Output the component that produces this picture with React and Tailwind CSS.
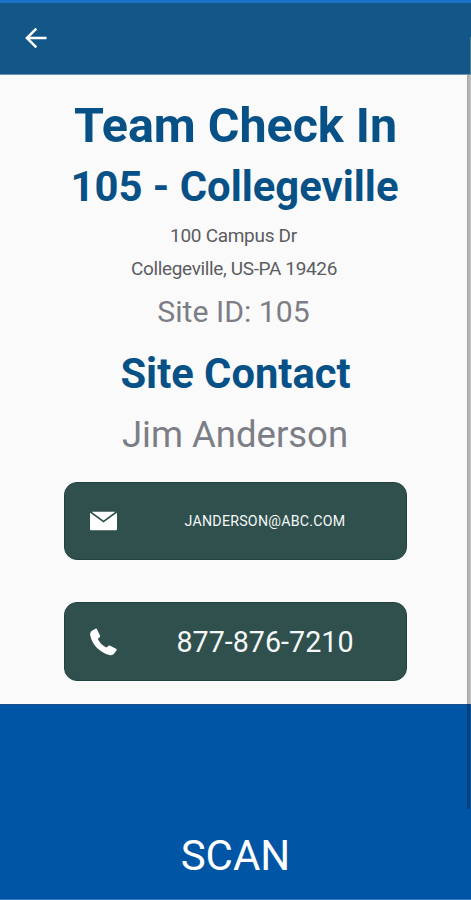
export default function App() {
  return (
    <div className="relative flex h-[900px] w-[471px] flex-col overflow-hidden bg-[#fafafb] font-[Roboto,sans-serif]">
      <header className="flex h-[75px] shrink-0 items-center border-t-[3px] border-b border-t-[#1a72c8] border-b-[#6d93b5] bg-[#135789] pb-[2px] pl-[24px]">
        <button aria-label="Back" className="block">
          <svg width="24" height="24" viewBox="0 0 24 24" fill="none" stroke="#fff" strokeWidth="2.5">
            <path d="M22.5 12H3M12.3 2.6L2.9 12l9.4 9.4" />
          </svg>
        </button>
      </header>

      <main className="flex h-[629px] shrink-0 flex-col items-center pt-[20px] whitespace-nowrap">
        <h1 className="text-[48.4px] leading-[61px] font-bold text-[#075186]">Team Check In</h1>
        <h2 className="pr-[2px] text-[41.8px] leading-[61px] font-bold text-[#075186]">105 - Collegeville</h2>
        <p className="mt-[3px] pr-[4px] text-[19px] leading-[32px] tracking-[-0.3px] text-[#5c5d60]">100 Campus Dr</p>
        <p className="mt-[1px] pr-[3px] text-[19px] leading-[32px] tracking-[-0.35px] text-[#5c5d60]">Collegeville, US-PA 19426</p>
        <p className="pr-[4px] text-[30.2px] leading-[54px] text-[#7c7e86]">Site ID: 105</p>
        <h2 className="mt-[1px] text-[41.7px] leading-[68px] font-bold text-[#075186]">Site Contact</h2>
        <p className="pr-[1px] text-[36.5px] leading-[53px] text-[#7c7e86]">Jim Anderson</p>

        <button className="mt-[21px] flex h-[78px] w-[343px] shrink-0 items-center rounded-[13px] border border-[#1f443f] bg-[#30504d] pl-[25px] text-[#f4f8f8]">
          <svg width="27" height="20" viewBox="0 0 27 20" fill="#fff">
            <path d="M1.6.8H25.4L13.5 9.5Z" />
            <path d="M0 1.8L13.5 11.6 27 1.8V18.2Q27 19.3 25.9 19.3H1.1Q0 19.3 0 18.2Z" />
          </svg>
          <span className="flex-1 pl-[7px] text-center text-[14.2px] leading-[20px] tracking-[0.25px]">JANDERSON@ABC.COM</span>
        </button>
        <button className="mt-[42px] flex h-[79px] w-[343px] shrink-0 items-center rounded-[13px] border border-[#1f443f] bg-[#30504d] pl-[25px] text-[#f4f8f8]">
          <svg width="27" height="28" viewBox="0 0 27 28" fill="#fff">
            <path d="M5.6.7C6.2.4 6.7.6 7 1.2L10 7.4C10.3 8.1 10.1 8.7 9.6 9.2L7.8 11C9.6 14.7 12.4 17.6 16.2 19.4L18.4 17.9C19 17.5 19.6 17.5 20.2 17.8L26 20.8C26.7 21.1 27 21.7 26.6 22.3L24.2 25.6C23 27.2 21.3 27.6 19.4 27.1C10.2 24.8 2.1 16.9.3 7.8C-.1 5.5.5 3.8 2.2 2.6Z" />
          </svg>
          <span className="flex-1 pl-[7px] text-center text-[28.7px] leading-[36px]">877-876-7210</span>
        </button>
      </main>

      <button className="flex h-[196px] shrink-0 items-end justify-center border-y border-t-[#1d5090] border-b-[#3b7bc0] bg-[#0055a5] pb-[18px] text-[42px] leading-[50px] text-white">
        SCAN
      </button>

      {/* Scroll indicator along the right edge */}
      <div className="absolute top-[37px] right-0 flex h-[772px] w-[4px] flex-col">
        <div className="ml-[3px] h-[38px] bg-[#4a8496]" />
        <div className="h-[629px] bg-linear-to-r from-[#a5a5a6] to-[#c4c4c5]" />
        <div className="mr-[1px] flex-1 bg-[#073f7c]" />
      </div>
    </div>
  );
}
